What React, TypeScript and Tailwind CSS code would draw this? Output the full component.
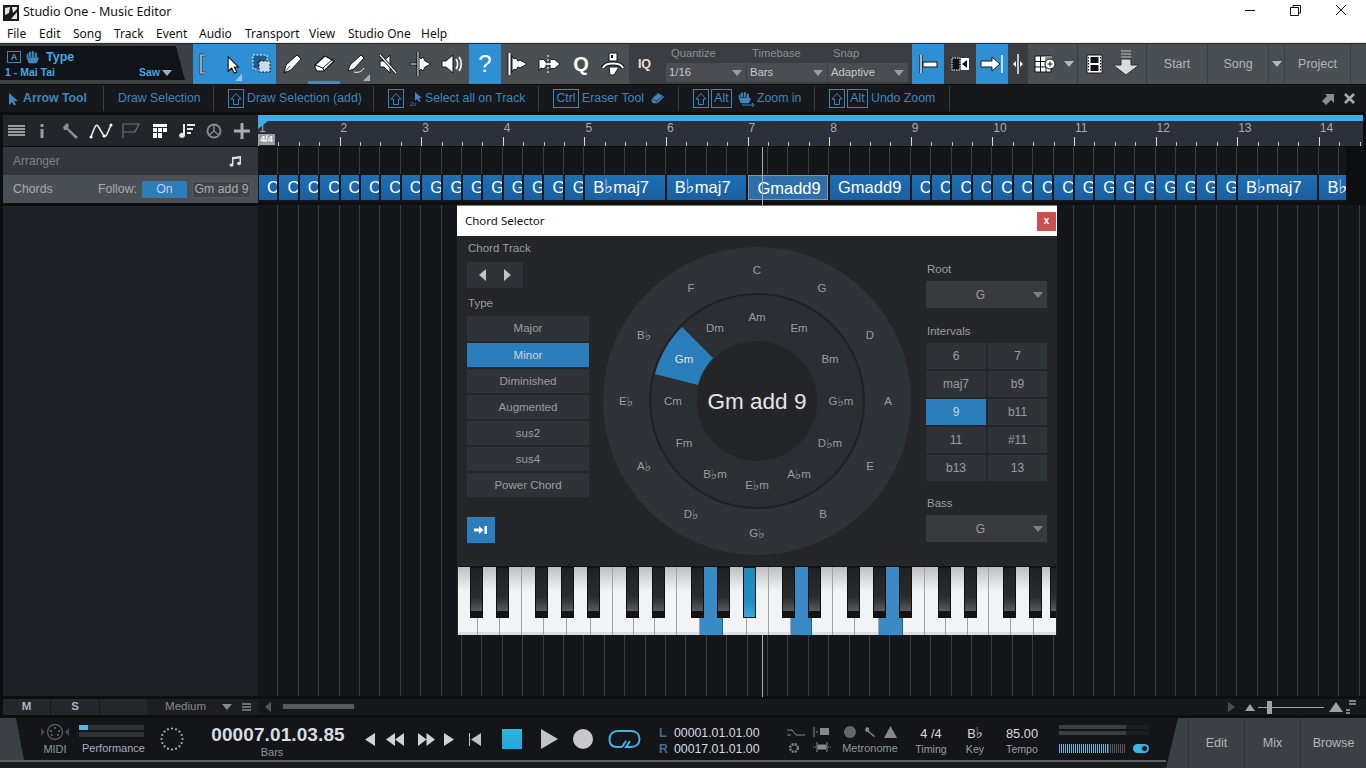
import React from "react";

const S = ({ w = 24, h = 24, vb, children, className = "" }: { w?: number; h?: number; vb?: string; children: React.ReactNode; className?: string }) => (
  <svg width={w} height={h} viewBox={vb ?? `0 0 ${w} ${h}`} className={`shrink-0 ${className}`}>{children}</svg>
);
const wp = { fill: "#fff", stroke: "#151618", strokeWidth: 1, strokeLinejoin: "round" as const };
const Fl = ({ t }: { t: string }) => {
  const p = t.split("♭");
  if (p.length === 1) return <>{t}</>;
  return <>{p[0]}<span className="font-['DejaVu_Sans',sans-serif] text-[1.15em] leading-none">♭</span>{p[1]}</>;
};
const Arrow = ({ c = "#fff", w = 24 }: { c?: string; w?: number }) => (
  <S w={w} h={w} vb="0 0 24 24"><path d="M7 3V20L11 16L14 22L17 20.5L14 15H19Z" fill={c} stroke="#151618" strokeWidth="1.3" strokeLinejoin="round" /></S>
);
const Corner = () => <div className="absolute right-[2px] bottom-[3px] w-0 h-0 border-l-[7px] border-l-transparent border-b-[7px] border-b-[#aeb2b6]" />;
const Caret = ({ c = "border-t-[#9a9da0]", className = "" }: { c?: string; className?: string }) => (
  <div className={`w-0 h-0 border-l-[5px] border-r-[5px] border-t-[6px] border-l-transparent border-r-transparent ${c} ${className}`} />
);
const Tool = ({ children, active, w = "w-[32px]", dark, underline }: { children: React.ReactNode; active?: boolean; w?: string; dark?: boolean; underline?: boolean }) => (
  <div className={`${w} h-full relative flex items-center justify-center shrink-0 ${active ? "bg-[#2f8fd3]" : dark ? "bg-[#3a3d41]" : ""}`}>
    {children}
    {underline && <div className="absolute left-0 right-0 bottom-0 h-[3px] bg-[#2f8fd3]" />}
  </div>
);
const Sep = ({ w, children }: { w: string; children: React.ReactNode }) => (
  <div className={`${w} h-[25px] shrink-0 flex items-center border-r border-[#3a3d41] text-[12.3px] text-[#3f87bb] whitespace-nowrap`}>{children}</div>
);
const Key = ({ children, w = "w-[16px]" }: { children: React.ReactNode; w?: string }) => (
  <div className={`${w} h-[19px] border border-[#3f87bb] flex items-center justify-center shrink-0 text-[12.3px] text-[#3f87bb]`}>{children}</div>
);
const Up = () => (
  <Key><S w={12} h={14}><path d="M6 1.5L11 7H8.5V12.5H3.5V7H1Z" fill="none" stroke="#3f87bb" strokeWidth="1" /></S></Key>
);
const Eraser = ({ c = "#fff", s = "#151618", w = 24 }: { c?: string; s?: string; w?: number }) => (
  <S w={w} h={w} vb="0 0 24 24"><path d="M3 13L13 4L22 9L12 19L5 19L3 16Z" fill={c} stroke={s} strokeWidth="1.2" strokeLinejoin="round" /><path d="M3 13L11 16L21 7M11 16L12 19" stroke="#151618" strokeWidth="1" fill="none" /></S>
);

const notes = [
  ["C", 270, 154], ["G", 288, 219], ["D", 335, 267], ["A", 401, 285], ["E", 466, 267], ["B", 514, 220], ["G♭", 533, 154], ["D♭", 514, 88], ["A♭", 466, 41], ["E♭", 401, 23], ["B♭", 335, 41], ["F", 288, 88],
  ["Am", 317, 154], ["Em", 328, 196], ["Bm", 359, 227], ["G♭m", 401, 238], ["D♭m", 443, 227], ["A♭m", 474, 196], ["E♭m", 485, 154], ["B♭m", 474, 112], ["Fm", 443, 81], ["Cm", 401, 70], ["Dm", 328, 112],
] as const;

const Wheel = () => (
  <svg width="308" height="308" viewBox="0 0 308 308" className="shrink-0">
    <circle cx="154" cy="154" r="154" fill="#2f3338" />
    <circle cx="154" cy="154" r="107" fill="#2b2e32" stroke="#1f2124" strokeWidth="2" />
    <path d="M79 80A105 105 0 0 0 52 127L95 138A61 61 0 0 1 110 111Z" fill="#2a7ebb" />
    <circle cx="154" cy="154" r="60" fill="#232528" />
    {notes.map(([t, y, x]) => {
      const p = t.split("♭");
      return (
        <text key={t} x={x} y={y - 247} textAnchor="middle" dominantBaseline="central" fontSize="11.5" fill="#9a9da0" fontFamily="'Liberation Sans',sans-serif">
          {p[0]}{p.length > 1 && <tspan fontFamily="'DejaVu Sans',sans-serif" fontSize="13.5">♭</tspan>}{p[1]}
        </text>
      );
    })}
    <text x="81" y="112" textAnchor="middle" dominantBaseline="central" fontSize="11.5" fill="#e0e4e8" fontFamily="'Liberation Sans',sans-serif">Gm</text>
    <text x="154" y="154" textAnchor="middle" dominantBaseline="central" fontSize="22.5" fill="#e4e6e8" fontFamily="'Liberation Sans',sans-serif">Gm add 9</text>
  </svg>
);

const Select = ({ v }: { v: string }) => (
  <div className="h-[27px] bg-[#383a3d] relative flex items-center justify-center text-[12px] text-[#9a9da0] pr-[22px] pl-[10px]">
    {v}
    <Caret c="border-t-[#7d8084]" className="absolute right-[4px] top-[11px]" />
  </div>
);

const whites = [20, 21.5, 22, 22.3, 23.2, 23.8, 22, 21.6, 21.1, 22, 22.3, 23.2, 23.8, 22, 22.2, 20.9, 21.6, 22, 23.8, 23.5, 22, 21.6, 21.2, 21.9, 22, 23.1, 22.3];
const blueW = new Set([11, 15, 19]);
const blacks = [476, 502, 541.5, 567.3, 593.5, 632.4, 658.2, 697.5, 723.7, 749.5, 788, 814, 853.5, 879.7, 905.5, 944.4, 970.6, 1009.5, 1035.4, 1056];

const Piano = () => (
  <div className="relative h-[69px] mx-[1px] flex overflow-hidden border-t border-[#111] bg-[#111]">
    {whites.map((w, i) => (
      <div key={i} style={{ width: w }} className={`shrink-0 h-full border-r border-[#a0a3a6] relative ${blueW.has(i) ? "bg-[#3a8ac5] border-r-[#2b5f88]" : "bg-[linear-gradient(#bdbfc1_0,#f1f3f5_24px,#f1f3f5_100%)]"}`}>
        {!blueW.has(i) && <div className="absolute bottom-0 left-0 right-0 h-[3px] bg-[#dcdee0]" />}
      </div>
    ))}
    {blacks.map((x, i) => (
      <div key={i} style={{ left: x - 458 - 6.5 }} className={`absolute top-0 w-[13px] h-[51px] border border-[#111] ${x === 749.5 ? "bg-[linear-gradient(#1f8ab8,#1f8fc0_70%,#38a9dc)]" : "bg-[linear-gradient(#202123,#2b2c2e_60%,#5a5b5d_88%)]"}`}>
        {x !== 749.5 && <div className="absolute left-0 right-0 bottom-0 h-[6px] bg-[#131315]" />}
      </div>
    ))}
  </div>
);

const TypeBtn = ({ t, on, h = "h-[24px] pt-[1px]" }: { t: string; on?: boolean; h?: string }) => (
  <div className={`${h} flex items-center justify-center text-[11.5px] ${on ? "bg-[#2a7ebb] text-[#c8d4de]" : "bg-[#2f3338] text-[#9a9da0]"}`}>{t}</div>
);

const Dialog = () => (
  <div className="absolute left-[457px] top-[205px] w-[600px] h-[430px] flex flex-col bg-[#242629] border-t border-[#2a8ad0]">
    <div className="h-[30px] bg-white flex items-center justify-between pl-[8px] pr-[1px] shrink-0">
      <span className="text-[11.5px] text-[#111] font-['Noto_Sans',sans-serif]">Chord Selector</span>
      <div className="w-[19px] h-[19px] bg-[#c9504f] text-white text-[10px] font-bold flex items-center justify-center leading-none">x</div>
    </div>
    <div className="h-[330px] flex pl-[10px] shrink-0">
      <div className="w-[122px] shrink-0 flex flex-col text-[11.5px] text-[#9a9da0]">
        <div className="pl-[1px] mt-[4px] h-[16px] leading-[16px]">Chord Track</div>
        <div className="mt-[6px] w-[56px] h-[26px] bg-[#2f3338] flex items-center justify-around px-[4px]">
          <S w={10} h={14}><path d="M8 1V13L1 7Z" fill="#c0c2c4" /></S>
          <S w={10} h={14}><path d="M2 1V13L9 7Z" fill="#c0c2c4" /></S>
        </div>
        <div className="pl-[1px] mt-[7px] h-[16px] leading-[16px]">Type</div>
        <div className="mt-[5px] flex flex-col gap-[2px]">
          <TypeBtn t="Major" h="h-[25px]" />
          <TypeBtn t="Minor" on />
          <TypeBtn t="Diminished" />
          <TypeBtn t="Augmented" />
          <TypeBtn t="sus2" />
          <TypeBtn t="sus4" />
          <TypeBtn t="Power Chord" />
        </div>
        <div className="mt-[20px] w-[28px] h-[26px] bg-[#2a7ebb] flex items-center justify-center">
          <S w={14} h={10}><path d="M0 3.5H5V1L9.5 5L5 9V6.5H0Z M10.5 1H13V9H10.5Z" fill="#fff" /></S>
        </div>
      </div>
      <div className="ml-[14px] mt-[11px]"><Wheel /></div>
      <div className="ml-[15px] w-[121px] shrink-0 text-[11.5px] text-[#9a9da0]">
        <div className="mt-[25px] h-[16px] leading-[16px] pl-[1px]">Root</div>
        <div className="mt-[4px]"><Select v="G" /></div>
        <div className="mt-[15px] h-[16px] leading-[16px] pl-[1px]">Intervals</div>
        <div className="mt-[4px] grid grid-cols-[60px_59px] gap-x-[2px] gap-y-[2px] auto-rows-[26px] text-[12px]">
          {["6", "7", "maj7", "b9", "9", "b11", "11", "#11", "b13", "13"].map((t) => (
            <div key={t} className={`flex items-center justify-center ${t === "9" ? "bg-[#2a7ebb] text-[#c8d4de]" : "bg-[#2f3338]"}`}>{t}</div>
          ))}
        </div>
        <div className="mt-[14px] h-[16px] leading-[16px] pl-[1px]">Bass</div>
        <div className="mt-[4px]"><Select v="G" /></div>
      </div>
    </div>
    <Piano />
  </div>
);

const chords: [string, number][] = [
  ...Array(8).fill(["C", 0]), ...Array(8).fill(["G", 0]),
  ["B♭maj7", 1], ["B♭maj7", 1], ["Gmadd9", 2], ["Gmadd9", 1],
  ...Array(8).fill(["C", 0]), ...Array(8).fill(["G", 0]),
  ["B♭maj7", 1], ["B♭maj7", 1],
];
const gridBg = "bg-[repeating-linear-gradient(90deg,transparent_0,transparent_19.4px,#3a3d42_19.4px,#3a3d42_20.4px)]";

const Toolbar = () => (
  <div className="h-[41px] flex shrink-0 bg-[#4a4f54] border-t border-[#2a2d30] text-[#c8c8c8]">
    <div className="w-[193px] h-full bg-[#3c4045] pt-[2px] shrink-0">
      <div className="w-[185px] h-[34px] bg-[#101318] [clip-path:polygon(0_0,176px_0,185px_100%,0_100%)] relative text-[11px] font-bold text-[#4aa8e0]">
        <div className="flex items-center h-[18px] pl-[7px] pt-[4px]">
          <div className="w-[14px] h-[12px] border border-[#4b87b0] text-[9px] leading-[10px] text-center text-[#5a8fb5]">A</div>
          <S w={16} h={16} className="ml-[3px]"><path d="M3 9V5h1v4M5 8V3h1.5v5M8 8V2.5h1.5V8M11 8.5V4h1.5v6l1-1.5 1 .5-2 5H5L3 9Z" fill="#3f87bb" stroke="#3f87bb" strokeWidth="0.7" /></S>
          <span className="ml-[6px] text-[12.5px]">Type</span>
        </div>
        <div className="flex items-center pl-[5px] text-[10.5px] mt-[1px]">
          <span className="w-[134px] whitespace-nowrap">1 - Mai Tai</span>
          <span>Saw</span>
          <Caret c="border-t-[#9ab0c0]" className="ml-[2px]" />
        </div>
      </div>
    </div>
    <div className="w-[83px] h-full bg-[#2f8fd3] flex shrink-0 items-center relative">
      <S w={10} h={24} className="ml-[5px]"><path d="M7 3H3V21H7" fill="none" stroke="#111" strokeWidth="2.6" /><path d="M7 3H3V21H7" fill="none" stroke="#fff" strokeWidth="1.2" /></S>
      <div className="ml-[14px]"><Arrow w={21} /></div>
      <S w={24} h={24} className="ml-[7px]"><rect x="3" y="3" width="14" height="14" fill="#1c5d8a" stroke="#fff" strokeDasharray="2 1.5" /><rect x="9" y="9" width="11" height="11" fill="#c9dcea" stroke="#111" strokeDasharray="2 1.5" /></S>
      <div className="absolute left-[42px] bottom-[3px] w-0 h-0 border-l-[7px] border-l-transparent border-b-[7px] border-b-[#9ac4e2]" />
    </div>
    <div className="w-[193px] flex shrink-0 h-full">
      <Tool><S><path d="M4 21L6 13L17 3L21 7L11 18Z" {...wp} /><path d="M4 21L10 14" stroke="#151618" strokeWidth="0.8" /></S></Tool>
      <Tool underline><Eraser /></Tool>
      <Tool><S><path d="M4 19L6 13L17 3L20 6L10 17Z" {...wp} /><path d="M10 20C13 21 18 20 20 16" stroke="#fff" fill="none" /></S><Corner /></Tool>
      <Tool><S><path d="M4 9H8L14 3V21L8 15H4Z" {...wp} /><path d="M4 3L20 21" stroke="#111" strokeWidth="3" /><path d="M4 3L20 21" stroke="#fff" strokeWidth="1.2" /></S></Tool>
      <Tool><S><path d="M2 11H9V7L11 5L13 7L15 5L17 9L23 12L17 15L15 19L13 17L11 19L9 15V13H2Z" {...wp} /><path d="M10 0V24" stroke="#111" strokeWidth="3" /><path d="M10 0V24" stroke="#fff" /></S></Tool>
      <Tool><S><path d="M2 9H6L13 3V21L6 15H2Z" {...wp} /><path d="M16 7C18 10 18 14 16 17M19 5C22 9 22 15 19 19" stroke="#fff" strokeWidth="1.6" fill="none" /></S></Tool>
    </div>
    <Tool active><span className="text-[24px] leading-none text-white">?</span></Tool>
    <div className="w-[128px] flex shrink-0 h-full">
      <Tool><S><path d="M7 4L9 7L11 6L13 9L15 8L22 12L15 16L13 15L11 18L9 17L7 20Z" {...wp} /><path d="M3 1V23M6 1V23" stroke="#111" strokeWidth="1" /><path d="M4.5 1V23" stroke="#fff" strokeWidth="2" /></S></Tool>
      <Tool><S><path d="M2 6L4 8L6 7L9 10V15L6 17L4 16L2 19Z" {...wp} /><path d="M13 6L15 8L17 7L23 12L17 17L15 16L13 18Z" {...wp} /><path d="M11 3V22" stroke="#fff" strokeDasharray="2 2" /><path d="M7 12H15" stroke="#fff" strokeWidth="1.5" /></S></Tool>
      <Tool><span className="text-[20px] font-bold text-white leading-none">Q</span></Tool>
      <Tool><S><path d="M8 1H16V9H8Z" {...wp} /><path d="M10 3H12V6H10Z" fill="#111" /><path d="M8 15H18L13 23H9Z" {...wp} /><path d="M2 16C4 10 20 10 22 16" stroke="#111" strokeWidth="4" fill="none" /><path d="M2 16C4 10 20 10 22 16" stroke="#fff" strokeWidth="2" fill="none" /></S></Tool>
    </div>
    <Tool w="w-[31px]" dark><span className="text-[12.5px] font-bold text-[#e0e0e0]">IQ</span></Tool>
    <div className="w-[252px] h-full bg-[#3a3d41] shrink-0 flex pl-[6px] gap-[1px]">
      {[["Quantize", "1/16"], ["Timebase", "Bars"], ["Snap", "Adaptive"]].map(([l, v]) => (
        <div key={l} className="w-[80px] shrink-0">
          <div className="h-[19px] pl-[5px] pt-[1px] text-[11.2px] text-[#8d9095] leading-[16px]">{l}</div>
          <div className="h-[19px] bg-[#4a4d52] flex items-center justify-between pl-[3px] pr-[4px] text-[11.3px] text-[#c8c8c8]">
            {v}<Caret c="border-t-[#999ca0]" />
          </div>
        </div>
      ))}
    </div>
    <Tool active><S><path d="M5 3V21" stroke="#111" strokeWidth="3" /><path d="M5 3V21" stroke="#fff" strokeWidth="1.4" /><rect x="7" y="10" width="14" height="5" fill="#fff" stroke="#111" /></S></Tool>
    <Tool dark><S><rect x="4" y="6" width="8" height="12" fill="#111" stroke="#fff" strokeDasharray="1.5 1" /><path d="M13 6H21V18H13Z" fill="#fff" /><path d="M19 8V16L14 12Z" fill="#111" /></S></Tool>
    <Tool active><S w={26}><path d="M2 9H13V5L21 12L13 19V15H2Z" {...wp} /><path d="M23 3V21" stroke="#fff" strokeWidth="1.4" /></S></Tool>
    <Tool dark w="w-[20px]"><S w={14}><path d="M7 2V22" stroke="#fff" strokeWidth="1.4" /><path d="M5 9V15L2 12Z M9 9V15L12 12Z" fill="#fff" /></S></Tool>
    <div className="w-[49px] shrink-0 h-full flex items-center pl-[5px]">
      <S w={24} h={24}><path d="M2 4H18V20H2Z" fill="#fff" stroke="#111" /><path d="M7.5 4V20M13 4V20M2 9.5H18M2 15H18" stroke="#111" /><rect x="12" y="4" width="7" height="6" fill="#8b8e92" /><circle cx="17" cy="12" r="5" fill="#fff" stroke="#111" /><path d="M14.5 12H19.5M17 9.5V14.5" stroke="#111" /></S>
      <Caret c="border-t-[#b5b8bb]" className="ml-[7px]" />
    </div>
    <div className="w-[69px] shrink-0 h-full flex items-center border-l border-[#3a3d41] pl-[8px] gap-[9px]">
      <S w={17} h={20}><rect x="1" y="1" width="15" height="18" rx="1.5" fill="#fff" stroke="#111" /><rect x="4.5" y="3" width="8" height="6" fill="#111" /><rect x="4.5" y="11" width="8" height="6" fill="#111" /><path d="M2.5 3V17M14.5 3V17" stroke="#111" strokeDasharray="1.5 1.5" /></S>
      <S w={28} h={28}><path d="M9 0H19V2H9ZM9 3H19V5H9ZM9 6H19V8H9Z" fill="#85888c" /><path d="M9 9H19V15H27L14 25L1 15H9Z" fill="#d9dbdd" stroke="#2a2c2e" /></S>
    </div>
    <div className="w-[61px] shrink-0 flex items-center justify-center text-[12.5px] text-[#b3b6ba] border-l border-[#3a3d41]">Start</div>
    <div className="w-[61px] shrink-0 flex items-center justify-center text-[12.5px] text-[#b3b6ba] border-l border-[#3a3d41]">Song</div>
    <div className="w-[16px] shrink-0 flex items-center justify-center border-l border-[#3a3d41]"><Caret c="border-t-[#b5b8bb]" /></div>
    <div className="w-[66px] shrink-0 flex items-center justify-center text-[12.5px] text-[#b3b6ba] border-l border-[#3a3d41]">Project</div>
    <div className="flex-1 border-l border-[#3a3d41]" />
  </div>
);

const HintBar = () => (
  <div className="h-[27px] mt-[1px] bg-[#16181b] flex items-center shrink-0">
    <Sep w="w-[104px]"><div className="w-[23px] flex justify-center pl-[2px]"><S w={12} h={14}><path d="M2 1V13L5 10L7 13.5L9 12.5L7 9H11Z" fill="#3f87bb" /></S></div><span className="font-bold">Arrow Tool</span></Sep>
    <Sep w="w-[110px]"><span className="ml-[14px]">Draw Selection</span></Sep>
    <Sep w="w-[160px]"><div className="ml-[14px]"><Up /></div><span className="ml-[3px]">Draw Selection (add)</span></Sep>
    <Sep w="w-[165px]"><div className="ml-[14px]"><Up /></div>
      <S w={14} h={16} className="ml-[6px]"><path d="M5 1V10L7 8L9 11L10.5 10L9 7H12Z" fill="#3f87bb" /><text x="0" y="15" fontSize="6" fill="#3f87bb">2x</text></S>
      <span className="ml-[1px]">Select all on Track</span></Sep>
    <Sep w="w-[140px]"><div className="ml-[14px]"><Key w="w-[26px]">Ctrl</Key></div><span className="ml-[3px]">Eraser Tool</span><div className="ml-[6px]"><Eraser c="#3f87bb" s="#3f87bb" w={15} /></div></Sep>
    <Sep w="w-[136px]"><div className="ml-[14px]"><Up /></div><div className="ml-[2px]"><Key w="w-[21px]">Alt</Key></div>
      <S w={18} h={16} className="ml-[5px]"><path d="M2 7V4h1v3M4 6V2h1.5v4M7 6V1.5h1.5V6M10 7V3h1.5v5L13 7l.5 1-2 4H4L2 7Z" fill="#3f87bb" stroke="#3f87bb" strokeWidth="0.6" /><path d="M5 14H17M15 12L17 14L15 16" stroke="#3f87bb" fill="none" /></S>
      <span className="ml-[2px]">Zoom in</span></Sep>
    <Sep w="w-[135px]"><div className="ml-[14px]"><Up /></div><div className="ml-[2px]"><Key w="w-[21px]">Alt</Key></div><span className="ml-[3px]">Undo Zoom</span></Sep>
    <div className="flex-1" />
    <S w={14} h={14} className="mr-[8px]"><path d="M4 2H13V11L10 8L5 13L1 9L6 4Z" fill="#8a8d90" /></S>
    <S w={13} h={13} className="mr-[10px]"><path d="M2 2L11 11M11 2L2 11" stroke="#a8abae" strokeWidth="2.6" /></S>
  </div>
);

const TrackHead = () => (
  <div className="w-[258px] shrink-0 flex flex-col pl-[3px] bg-[#0d0e10]">
    <div className="h-[31px] bg-[#222529] flex items-center shrink-0 relative">
      <S w={17} h={14} className="ml-[5px]"><path d="M0 2H17M0 5H17M0 8H17M0 11H17" stroke="#9a9da0" strokeWidth="1.8" /></S>
      <S w={8} h={16} className="ml-[13px]"><path d="M2.5 1H5.5V4H2.5ZM2.5 6H5.5V15H2.5Z" fill="#9a9da0" /></S>
      <S w={18} h={18} className="ml-[16px]"><path d="M1 5L5 1L7 3L6 6L16 15L14 17L5 8L2 8Z" fill="#8a8d90" /></S>
      <S w={24} h={18} className="ml-[9px]"><path d="M2 15C6 4 7 2 9 4L15 14C17 16 19 10 22 3" fill="none" stroke="#e8e8e8" strokeWidth="1.6" /><circle cx="2" cy="15" r="1.5" fill="#fff" /><circle cx="15" cy="14" r="1.5" fill="#fff" /><circle cx="22" cy="3" r="1.5" fill="#fff" /></S>
      <S w={18} h={16} className="ml-[9px]"><path d="M1 1V15M1 1H17L13 9H1" fill="none" stroke="#6f7276" strokeWidth="1.2" /></S>
      <S w={14} h={14} className="ml-[13px]"><path d="M0 0H14V3H0ZM0 4H4V8H0ZM5 4H9V8H5ZM10 4H14V8H10ZM5 9H9V14H5ZM0 9H4V14H0Z" fill="#fff" /></S>
      <S w={17} h={16} className="ml-[11px]"><path d="M7 1V12A3 2.5 0 1 1 5 10V1Z M9 1H17V3H9ZM9 5H15V7H9ZM9 9H13V11H9Z" fill="#e8e8e8" /></S>
      <S w={16} h={16} className="ml-[11px]"><circle cx="8" cy="8" r="6.5" fill="none" stroke="#85888c" strokeWidth="2" /><path d="M8 2V8L3 12M8 8L13 12" stroke="#85888c" strokeWidth="1.5" fill="none" /></S>
      <S w={16} h={16} className="ml-[12px]"><path d="M6.5 0H9.5V6.5H16V9.5H9.5V16H6.5V9.5H0V6.5H6.5Z" fill="#a9acb0" /></S>
    </div>
    <div className="h-[28px] mt-[1px] bg-[#33373d] flex items-center justify-between pl-[10px] pr-[16px] text-[12px] text-[#7f8286] shrink-0">
      Arranger
      <S w={13} h={12}><path d="M3 2L12 1V8.5A2 1.6 0 1 1 10.5 7V3.5L4.5 4.2V10A2 1.6 0 1 1 3 8.5Z" fill="#e0e0e0" /></S>
    </div>
    <div className="h-[28px] bg-[#4a4f55] flex items-center pl-[10px] text-[12.3px] text-[#a8abae] shrink-0">
      <span className="w-[85px]">Chords</span>
      <span className="w-[44px]">Follow:</span>
      <div className="w-[45px] h-[17px] bg-[#2a7ebb] flex items-center justify-center text-[#c8d4de]">On</div>
      <div className="ml-[5px] w-[59px] h-[17px] bg-[#3f4348] border border-[#55595e] flex items-center justify-center text-[#a8abae] whitespace-nowrap">Gm add 9</div>
    </div>
    <div className="h-[3px] bg-[#0d0e10] shrink-0" />
    <div className="flex-1 bg-[#1e2025]" />
    <div className="h-[16px] mt-[3px] bg-[#1c1e22] flex items-stretch text-[11.5px] shrink-0 text-[#b0b3b6]">
      <div className="w-[48px] bg-[#24272b] border-r border-[#15171a] flex items-center justify-center font-bold">M</div>
      <div className="w-[49px] bg-[#24272b] border-r border-[#15171a] flex items-center justify-center font-bold">S</div>
      <div className="w-[47px] bg-[#24272b]" />
      <div className="w-[59px] flex items-center justify-end text-[#85888c]">Medium</div>
      <div className="ml-[16px] flex items-center"><Caret c="border-t-[#85888c]" /></div>
      <div className="ml-[10px] flex items-center"><S w={9} h={8}><path d="M0 1H9M0 4H9M0 7H9" stroke="#85888c" strokeWidth="1.6" /></S></div>
    </div>
  </div>
);

const Timeline = () => (
  <div className="flex-1 min-w-0 flex flex-col relative">
    <div className="h-[6px] bg-[#3cabe8] w-[1105px] shrink-0" />
    <div className="h-[25px] w-[1105px] bg-[#2b303a] relative shrink-0 flex">
      <div className="absolute left-0 top-0 w-0 h-0 border-r-[10px] border-r-transparent border-t-[8px] border-t-[#3cabe8]" />
      {Array.from({ length: 14 }).map((_, i) => (
        <div key={i} className="w-[81.6px] shrink-0 pl-[1px] text-[12px] leading-[12px] pt-[1px] text-[#a8abae]">{i + 1}</div>
      ))}
      <div className="absolute left-0 bottom-0 right-0 h-[4px] bg-[repeating-linear-gradient(90deg,#bfc2c5_0,#bfc2c5_1px,transparent_1px,transparent_20.4px)]" />
      <div className="absolute left-0 bottom-0 right-0 h-[9px] bg-[repeating-linear-gradient(90deg,#d8dadc_0,#d8dadc_1px,transparent_1px,transparent_81.6px)]" />
      <div className="absolute left-0 bottom-[1px] w-[17px] h-[11px] bg-[#9a9da0] text-[9px] leading-[11px] font-bold text-white text-center">4/4</div>
    </div>
    <div className="h-[1px] bg-[#0b0c0d] shrink-0" />
    <div className="flex w-[1088px] flex-col shrink-0">
      <div className={`h-[27px] bg-[#141619] ${gridBg} shrink-0`} />
      <div className="h-[28px] bg-[#141619] flex overflow-hidden pt-[1px] pb-[2px] pl-[1px] shrink-0">
        {chords.map(([t, k], i) => (
          <div key={i} className={`${k === 0 ? "w-[18.4px]" : "w-[79.6px]"} mr-[2px] shrink-0 overflow-hidden pl-[8px] text-[16.5px] leading-[25px] text-white whitespace-nowrap ${k === 2 ? "bg-[#306fa6] border border-[#7d97ad] leading-[23px]" : "bg-[linear-gradient(#1f6fb5,#1a5f9e)]"}`}><Fl t={t} /></div>
        ))}
      </div>
    </div>
    <div className="h-[3px] bg-[#0d0e10] shrink-0" />
    <div className={`flex-1 bg-[#141619] ${gridBg}`} />
    <div className="h-[16px] mt-[3px] bg-[#16181b] shrink-0 flex items-center justify-end pr-[10px]">
      <S w={7} h={10}><path d="M0 0V10L7 5Z" fill="#4b4e52" /></S>
      <S w={10} h={7} className="ml-[10px]"><path d="M5 0L10 7H0Z" fill="#a0a3a6" /></S>
      <div className="ml-[3px] w-[66px] h-[1px] bg-[#a0a3a6] relative"><div className="absolute left-[9px] -top-[6px] w-[5px] h-[13px] bg-[#a0a3a6]" /></div>
      <S w={14} h={10} className="ml-[5px]"><path d="M7 0L14 10H0Z" fill="#a0a3a6" /></S>
      <S w={10} h={14} className="ml-[3px]"><path d="M3 0H10V2H3ZM3 3H10V5H3ZM0 9H4V11H0ZM0 12H4V14H0Z" fill="#7d8084" /></S>
    </div>
    <div className="absolute left-[504px] top-[32px] bottom-[18px] w-[1px] bg-[#a8abae]" />
    <div className="absolute left-[25px] bottom-[6px] w-[71px] h-[5px] bg-[#56595d]" />
    <div className="absolute left-[7px] bottom-[3px]"><S w={7} h={10}><path d="M6 0V10L0 5Z" fill="#56595d" /></S></div>
  </div>
);

const Transport = () => (
  <div className="h-[50px] mt-[3px] flex relative shrink-0 bg-[#1a1c1f]">
    <div className="flex-1 min-w-0 h-[44px] bg-[#131518] border-b-2 border-[#5d6064] flex items-center relative">
      <div className="absolute left-0 top-0 bottom-0 w-[24px] bg-[#3c4045] [clip-path:polygon(0_0,16px_0,24px_100%,0_100%)]" />
      <div className="w-[40px] ml-[35px] shrink-0 flex flex-col items-center">
        <div className="flex items-center gap-[1px]">
          <S w={4} h={8}><path d="M0 0V8L4 4Z" fill="#3a4a56" /></S>
          <S w={18} h={18}><circle cx="9" cy="9" r="7.5" fill="none" stroke="#54585c" strokeWidth="1.4" /><g fill="#6a6e72"><circle cx="9" cy="5" r="1" /><circle cx="5" cy="8" r="1" /><circle cx="13" cy="8" r="1" /><circle cx="6" cy="12" r="1" /><circle cx="12" cy="12" r="1" /></g></S>
          <S w={4} h={8}><path d="M4 0V8L0 4Z" fill="#3a4a56" /></S>
        </div>
        <span className="text-[11px] leading-[14px] mt-[1px] text-[#8a97a3]">MIDI</span>
      </div>
      <div className="ml-[4px] w-[66px] shrink-0 flex flex-col pt-[2px]">
        <div className="h-[5px] w-[65px] bg-[#2f3237] mb-[2px]"><div className="w-[9px] h-full bg-[#5ab4e0]" /></div>
        <div className="h-[5px] w-[65px] bg-[#2f3237]" />
        <span className="text-[11px] leading-[14px] mt-[4px] ml-[3px] whitespace-nowrap text-[#a8b0c0]">Performance</span>
      </div>
      <div className="ml-[15px] shrink-0">
        <S w={24} h={24}>{Array.from({ length: 16 }).map((_, i) => (<circle key={i} cx={12 + 10.5 * Math.cos((i * Math.PI) / 8)} cy={12 + 10.5 * Math.sin((i * Math.PI) / 8)} r="1.1" fill="#b0b3b6" />))}</S>
      </div>
      <div className="ml-[27px] w-[134px] shrink-0 flex flex-col items-center pt-[3px]">
        <span className="text-[19px] tracking-[0.1px] font-bold leading-[23px] text-[#d5dde5] whitespace-nowrap">00007.01.03.85</span>
        <span className="text-[11px] leading-[12px] text-[#8a97a3] pr-[12px]">Bars</span>
      </div>
      <div className="ml-[20px] flex items-center">
        <S w={10} h={13}><path d="M10 0V13L0 6.5Z" fill="#d0d2d4" /></S>
        <S w={18} h={13} className="ml-[11px]"><path d="M9 0V13L0 6.5ZM18 0V13L9 6.5Z" fill="#d0d2d4" /></S>
        <S w={17} h={13} className="ml-[14px]"><path d="M0 0V13L8.5 6.5ZM8.5 0V13L17 6.5Z" fill="#d0d2d4" /></S>
        <S w={10} h={13} className="ml-[9px]"><path d="M0 0V13L10 6.5Z" fill="#d0d2d4" /></S>
        <S w={12} h={13} className="ml-[15px]"><path d="M0 0H1V13H0ZM12 0V13L2 6.5Z" fill="#c0c2c4" /></S>
        <div className="ml-[21px] w-[20px] h-[20px] bg-[linear-gradient(#2cb5e0,#28a5d5)]" />
        <S w={17} h={20} className="ml-[19px]"><path d="M0 0V20L17 10Z" fill="#c2c4c6" /></S>
        <div className="ml-[15px] w-[20px] h-[20px] rounded-full bg-[#c8c8c8]" />
        <S w={33} h={20} className="ml-[15px]"><path d="M14 18H9C4 18 1.5 15 1.5 10.5C1.5 5 5 2 10 2H23C28 2 31.5 5 31.5 10C31.5 15 28 18 23 18H18L22 12M14 18L18 12" fill="none" stroke="#3fb3e6" strokeWidth="2" /></S>
      </div>
      <div className="ml-[18px] w-[105px] shrink-0 flex flex-col text-[12.3px] leading-[16px] text-[#d5dde5] pt-[3px]">
        <div className="flex"><span className="w-[15px] font-bold text-[#3f6f94]">L</span>00001.01.01.00</div>
        <div className="flex"><span className="w-[15px] font-bold text-[#3f6f94]">R</span>00017.01.01.00</div>
      </div>
      <div className="ml-[23px] grid grid-cols-[18px_16px] gap-x-[8px] gap-y-[5px] w-[52px] shrink-0 pt-[2px]">
        <S w={18} h={10}><path d="M0 3H5L9 8H18M0 8H4" fill="none" stroke="#85888c" /></S>
        <S w={16} h={10}><path d="M1 0V10M3 5H5" stroke="#85888c" /><path d="M7 1H16V8H7Z" fill="#85888c" /></S>
        <S w={12} h={12} className="ml-[1px]"><circle cx="6" cy="6" r="3.8" fill="none" stroke="#85888c" strokeWidth="2.4" strokeDasharray="2 1" /></S>
        <S w={18} h={10}><path d="M0 5H3M15 5H18" stroke="#85888c" strokeDasharray="1 1" /><path d="M4 0V10M14 0V10M5 3H13V7H5Z" fill="#85888c" stroke="#85888c" /></S>
      </div>
      <div className="ml-[3px] w-[56px] shrink-0 flex flex-col items-center pt-[3px]">
        <div className="flex items-center gap-[8px] mb-[3px]">
          <div className="w-[12px] h-[12px] rounded-full bg-[#5d6b6b]" />
          <S w={12} h={12}><path d="M1 3L3 1L5 2L5 5L11 10L10 11L4 6L2 6Z" fill="#85888c" /></S>
          <S w={13} h={12}><path d="M6.5 0L13 12H0Z" fill="#85888c" /></S>
        </div>
        <span className="text-[11px] leading-[14px] whitespace-nowrap text-[#8a97a3]">Metronome</span>
      </div>
      <div className="ml-[16px] w-[34px] shrink-0 flex flex-col items-center pt-[2px]">
        <span className="text-[12.8px] leading-[17px] text-[#d5dde5] whitespace-nowrap">4 /4</span>
        <span className="text-[10.6px] leading-[14px] text-[#9a9da0]">Timing</span>
      </div>
      <div className="ml-[16px] w-[22px] shrink-0 flex flex-col items-center pt-[2px]">
        <span className="text-[12.8px] leading-[17px] text-[#d5dde5]"><Fl t="B♭" /></span>
        <span className="text-[10.6px] leading-[14px] text-[#9a9da0]">Key</span>
      </div>
      <div className="ml-[16px] w-[40px] shrink-0 flex flex-col items-center pt-[2px]">
        <span className="text-[12.8px] leading-[17px] text-[#d5dde5]">85.00</span>
        <span className="text-[10.6px] leading-[14px] text-[#9a9da0]">Tempo</span>
      </div>
      <div className="ml-[17px] w-[90px] shrink-0 flex flex-col">
        <div className="h-[4px] w-[90px] bg-[#1c1e21] mb-[2px]"><div className="h-full w-[67px] bg-[#3a3d41]" /></div>
        <div className="h-[4px] w-[90px] bg-[#1c1e21]"><div className="h-full w-[67px] bg-[#3a3d41]" /></div>
        <div className="flex items-center mt-[9px]">
          <div className="w-[67px] h-[9px] bg-[repeating-linear-gradient(90deg,#6cb4dc_0,#6cb4dc_1px,transparent_1px,transparent_2px)] relative"><div className="absolute left-[49px] right-0 top-0 bottom-0 bg-[repeating-linear-gradient(90deg,#55585c_0,#55585c_1px,#131518_1px,#131518_2px)]" /></div>
          <div className="ml-[7px] w-[16px] h-[9px] rounded-full bg-[#3fb3e6] relative"><div className="absolute right-[1px] top-[1px] w-[7px] h-[7px] rounded-full bg-[#131518] border border-[#3fb3e6]" /></div>
        </div>
      </div>
    </div>
    <div className="w-[200px] shrink-0 bg-[#3c4045] flex text-[12.5px] text-[#b3b6ba] relative">
      <div className="w-[22px] h-full bg-[#131518] [clip-path:polygon(0_0,12px_0,0_100%)]" />
      <div className="w-[56px] flex items-center justify-center border-l border-[#2f3237]">Edit</div>
      <div className="w-[56px] flex items-center justify-center border-l border-[#2f3237]">Mix</div>
      <div className="flex-1 flex items-center justify-center border-l border-[#2f3237]">Browse</div>
    </div>
  </div>
);

export default function App() {
  return (
    <div className="w-[1366px] h-[768px] relative overflow-hidden flex flex-col bg-[#0d0e10] font-['Liberation_Sans',sans-serif]">
      <div className="h-[42px] bg-white shrink-0 font-['Noto_Sans',sans-serif] text-[#111]">
        <div className="h-[25px] flex items-center relative">
          <S w={16} h={16} className="ml-[3px]"><rect width="16" height="16" fill="#1c1c1c" /><path d="M2 3L7 2L6 8L2 10ZM9 2H14V4L10 8ZM8 14L14 7V14Z" fill="#e8e8e8" /></S>
          <span className="ml-[4px] text-[12.5px]">Studio One - Music Editor</span>
          <div className="absolute right-[20px] top-0 h-[20px] flex items-center gap-[35px]">
            <div className="w-[10px] h-[1px] bg-[#111]" />
            <S w={11} h={11}><path d="M3 2.5V.5H10.5V8H8.5M.5 2.5H8.5V10.5H.5Z" fill="none" stroke="#111" /></S>
            <S w={10} h={10}><path d="M0 0L10 10M10 0L0 10" stroke="#111" /></S>
          </div>
        </div>
        <div className="h-[17px] flex items-center pl-[7px] text-[12px] leading-none">
          {[["File", "w-[32px]"], ["Edit", "w-[34px]"], ["Song", "w-[41px]"], ["Track", "w-[42px]"], ["Event", "w-[43px]"], ["Audio", "w-[46px]"], ["Transport", "w-[64px]"], ["View", "w-[39px]"], ["Studio One", "w-[73px]"], ["Help", "w-[30px]"]].map(([t, w]) => (
            <span key={t} className={`${w} whitespace-nowrap`}>{t}</span>
          ))}
        </div>
      </div>
      <div className="h-[1px] bg-[#e8e8e8] shrink-0" />
      <Toolbar />
      <HintBar />
      <div className="h-[3px] shrink-0" />
      <div className="flex h-[600px] shrink-0">
        <TrackHead />
        <Timeline />
      </div>
      <Transport />
      <Dialog />
    </div>
  );
}
